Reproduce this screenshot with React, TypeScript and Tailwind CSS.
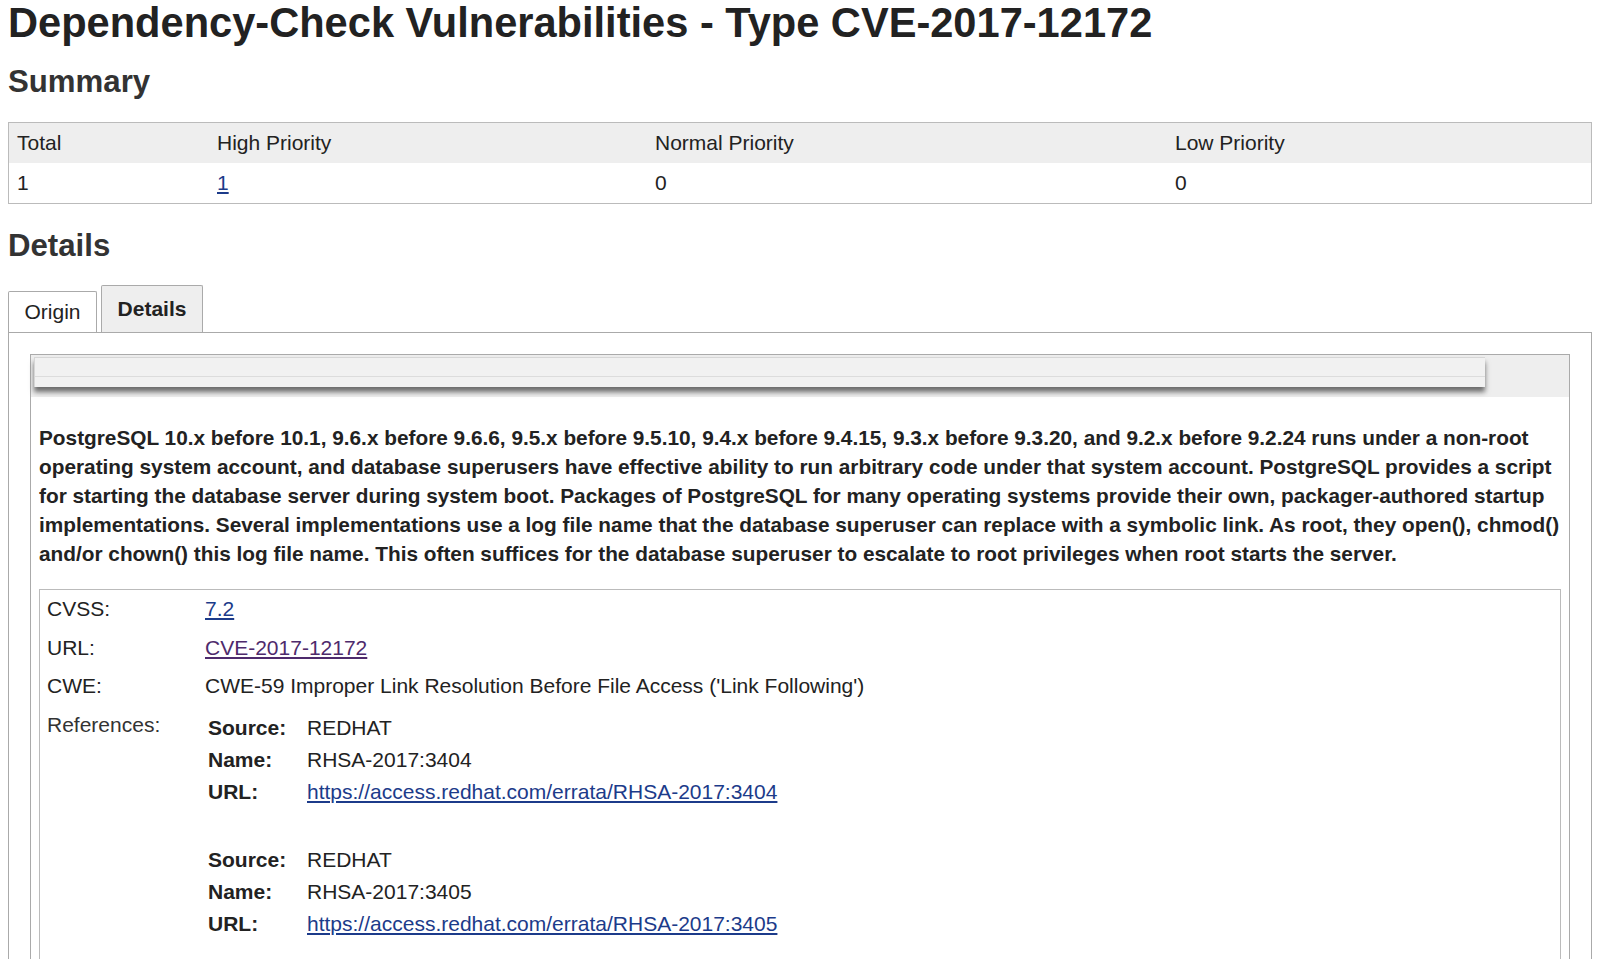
import React from 'react';

const refs = [
  { source: 'REDHAT', name: 'RHSA-2017:3404', url: 'https://access.redhat.com/errata/RHSA-2017:3404' },
  { source: 'REDHAT', name: 'RHSA-2017:3405', url: 'https://access.redhat.com/errata/RHSA-2017:3405' },
];

export default function App() {
  return (
    <div className="min-h-screen bg-white text-[#222] px-2 font-['Liberation_Sans',Arial,sans-serif]">
      <h1 className="text-[41.6px] font-bold leading-[46px] text-[#222]">
        Dependency-Check Vulnerabilities - Type CVE-2017-12172
      </h1>

      <h2 className="mt-[19px] text-[31.2px] font-bold leading-[34px] text-[#333]">Summary</h2>

      <div className="mt-[23px] border border-[#bbb] text-[21px]">
        <div className="grid grid-cols-[200px_438px_520px_1fr] bg-[#eee] h-[40px] items-center">
          <div className="pl-[8px]">Total</div>
          <div className="pl-[8px]">High Priority</div>
          <div className="pl-[8px]">Normal Priority</div>
          <div className="pl-[8px]">Low Priority</div>
        </div>
        <div className="grid grid-cols-[200px_438px_520px_1fr] h-[40px] items-center">
          <div className="pl-[8px]">1</div>
          <div className="pl-[8px]">
            <a href="#" className="text-[#1c3b8a] underline">1</a>
          </div>
          <div className="pl-[8px]">0</div>
          <div className="pl-[8px]">0</div>
        </div>
      </div>

      <h2 className="mt-[25px] text-[31.2px] font-bold leading-[34px] text-[#333]">Details</h2>

      {/* tabs */}
      <div className="mt-[22px] flex items-end gap-[4px] text-[21px]">
        <div className="h-[41px] w-[89px] border border-b-0 border-[#aaa] bg-white flex items-center justify-center rounded-t-[2px]">
          Origin
        </div>
        <div className="h-[47px] w-[102px] border border-b-0 border-[#aaa] bg-[#eee] flex items-center justify-center font-bold rounded-t-[2px]">
          Details
        </div>
      </div>

      <div className="border border-b-0 border-[#aaa] pt-[21px] px-[21px]">
        <div className="border border-b-0 border-[#aaa]">
          <div className="h-[42px] bg-[#eee] pt-[2px] pl-[3px]">
            <div className="h-[30px] w-[1451px] bg-[#f1f1f1] border-t border-l border-[#d6d6d6] shadow-[0_5px_5px_rgba(0,0,0,0.55)] flex flex-col">
              <div className="h-[18px]" />
              <div className="border-t border-[#dcdcdc]" />
            </div>
          </div>

          <div className="px-[8px] pt-[26px]">
            <p className="text-[20.8px] font-bold leading-[29px]">
              PostgreSQL 10.x before 10.1, 9.6.x before 9.6.6, 9.5.x before 9.5.10, 9.4.x before 9.4.15, 9.3.x before 9.3.20, and 9.2.x before 9.2.24 runs under a non-root operating system account, and database superusers have effective ability to run arbitrary code under that system account. PostgreSQL provides a script for starting the database server during system boot. Packages of PostgreSQL for many operating systems provide their own, packager-authored startup implementations. Several implementations use a log file name that the database superuser can replace with a symbolic link. As root, they open(), chmod() and/or chown() this log file name. This often suffices for the database superuser to escalate to root privileges when root starts the server.
            </p>

            <div className="mt-[21px] border border-b-0 border-[#bbb] text-[21px]">
              <div className="grid grid-cols-[158px_1fr] py-[7px] leading-[24.5px]">
                <div className="pl-[7px]">CVSS:</div>
                <div className="pl-[7px]">
                  <a href="#" className="text-[#1c3b8a] underline">7.2</a>
                </div>
              </div>
              <div className="grid grid-cols-[158px_1fr] py-[7px] leading-[24.5px]">
                <div className="pl-[7px]">URL:</div>
                <div className="pl-[7px]">
                  <a href="#" className="text-[#4e2a6c] underline">CVE-2017-12172</a>
                </div>
              </div>
              <div className="grid grid-cols-[158px_1fr] py-[7px] leading-[24.5px]">
                <div className="pl-[7px]">CWE:</div>
                <div className="pl-[7px]">
                  CWE-59 Improper Link Resolution Before File Access ('Link Following')
                </div>
              </div>
              <div className="grid grid-cols-[158px_1fr] pt-[7px] leading-[24.5px]">
                <div className="pl-[7px] text-[#333]">References:</div>
                <div className="pl-[10px] mt-[-1px]">
                  {refs.map((r, i) => (
                    <div key={i} className="grid grid-cols-[99px_1fr] leading-[32px] pb-[36px]">
                      <div className="font-bold">Source:</div>
                      <div>{r.source}</div>
                      <div className="font-bold">Name:</div>
                      <div>{r.name}</div>
                      <div className="font-bold">URL:</div>
                      <div>
                        <a href="#" className="text-[#1c3b8a] underline">{r.url}</a>
                      </div>
                    </div>
                  ))}
                </div>
              </div>
            </div>
          </div>
        </div>
      </div>
    </div>
  );
}
